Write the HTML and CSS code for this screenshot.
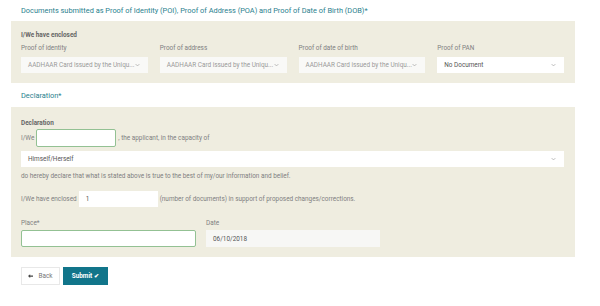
FILE: index.html
```html
<!DOCTYPE html>
<html lang="en">
<head>
<meta charset="UTF-8" />
<title>Declaration</title>
<link rel="stylesheet" href="styles.css">
</head>
<body>

<div class="page">
  <h3 class="section-title">Documents submitted as Proof of Identity (POI), Proof of Address (POA) and Proof of Date of Birth (DOB)*</h3>
  <div class="panel">
    <div class="strong-label">I/We have enclosed</div>
    <div class="doc-grid">
      <div class="field">
        <label>Proof of identity</label>
        <div class="select disabled"><span>AADHAAR Card issued by the Uniqu...</span><svg class="chev" viewBox="0 0 8 5"><path d="M1 1l3 3 3-3" /></svg></div>
      </div>
      <div class="field">
        <label>Proof of address</label>
        <div class="select disabled"><span>AADHAAR Card issued by the Uniqu...</span><svg class="chev" viewBox="0 0 8 5"><path d="M1 1l3 3 3-3" /></svg></div>
      </div>
      <div class="field">
        <label>Proof of date of birth</label>
        <div class="select disabled"><span>AADHAAR Card issued by the Uniqu...</span><svg class="chev" viewBox="0 0 8 5"><path d="M1 1l3 3 3-3" /></svg></div>
      </div>
      <div class="field">
        <label>Proof of PAN</label>
        <div class="select"><span>No Document</span><svg class="chev" viewBox="0 0 8 5"><path d="M1 1l3 3 3-3" /></svg></div>
      </div>
    </div>
  </div>

  <h3 class="section-title second">Declaration*</h3>
  <div class="panel decl">
    <div class="strong-label">Declaration</div>
    <div class="inline-row iwe">
      <span>I/We</span>
      <div class="input green name"></div>
      <span>, the applicant, in the capacity of</span>
    </div>
    <div class="select wide"><span>Himself/Herself</span><svg class="chev" viewBox="0 0 8 5"><path d="M1 1l3 3 3-3" /></svg></div>
    <p class="text">do hereby declare that what is stated above is true to the best of my/our information and belief.</p>
    <div class="inline-row enclosed">
      <span>I/We have enclosed</span>
      <div class="input count">1</div>
      <span>(number of documents) in support of proposed changes/corrections.</span>
    </div>
    <div class="place-grid">
      <div class="field">
        <label>Place*</label>
        <div class="input green place"></div>
      </div>
      <div class="field">
        <label>Date</label>
        <div class="input date">06/10/2018</div>
      </div>
    </div>
  </div>

  <div class="actions">
    <button class="btn back"><svg viewBox="0 0 8 6"><path d="M0 3L3.5 0v2H8v2H3.5v2z" /></svg>Back</button>
    <button class="btn submit">Submit <span class="tick">&#10004;</span></button>
  </div>
</div>

</body>
</html>
```

FILE: styles.css
```css
:root {
  --teal: #2a7f8e;
  --teal-dark: #11758a;
  --panel: #efede0;
  --label: #808080;
  --text: #555;
  --green: #93c193;
}

body {
  margin: 0;
  background: #fff;
  font-family: Roboto, "Liberation Sans", sans-serif;
  color: var(--text);
}

.page {
  width: 564px;
  padding: 5px 0 0 11px;
}

.section-title {
  margin: 0 0 4px;
  padding-left: 10px;
  font-size: 7.4px;
  line-height: 12px;
  font-weight: 400;
  color: var(--teal);
}
.section-title.second {
  margin: 7px 0 5px;
}

.panel {
  background: var(--panel);
  padding: 10px 11px 10px 10px;
}
.panel.decl {
  padding-top: 12px;
}

.strong-label {
  font-size: 6.4px;
  line-height: 8px;
  font-weight: 700;
  color: #666;
}

.doc-grid {
  display: grid;
  grid-template-columns: repeat(4, 1fr);
  column-gap: 12px;
  margin-top: 5px;
}

.field label {
  display: block;
  font-size: 6.4px;
  line-height: 8px;
  color: var(--label);
  margin-bottom: 5px;
}

.select {
  display: flex;
  align-items: center;
  justify-content: space-between;
  height: 16px;
  padding: 0 8px 0 7px;
  background: #fff;
  font-size: 6.4px;
  color: #555;
  box-sizing: border-box;
}
.select.disabled {
  background: #f9f9f7;
  color: #999;
}
.chev {
  width: 5px;
  height: 4px;
  fill: none;
  stroke: #999;
  stroke-width: 1;
}

.inline-row {
  display: flex;
  align-items: center;
  gap: 2px;
  font-size: 6.4px;
  color: var(--label);
}
.inline-row.iwe {
  margin-top: 2px;
}
.inline-row.enclosed {
  margin-top: 11px;
}

.input {
  box-sizing: border-box;
  background: #fff;
  font-size: 6.4px;
  color: #555;
  display: flex;
  align-items: center;
  padding: 0 7px;
}
.input.green {
  border: 1px solid var(--green);
  border-radius: 2px;
}
.input.name {
  width: 80px;
  height: 18px;
}
.input.count {
  width: 79px;
  height: 16px;
}
.input.place {
  height: 17px;
}
.input.date {
  height: 17px;
  background: #f7f7f5;
}

.select.wide {
  margin-top: 4px;
}

.text {
  margin: 5px 0 0;
  font-size: 6.4px;
  line-height: 8px;
  color: var(--label);
}

.place-grid {
  display: grid;
  grid-template-columns: 175px 174px;
  column-gap: 10px;
  margin-top: 12px;
}
.place-grid .field label {
  margin-bottom: 3px;
}

.actions {
  display: flex;
  gap: 3px;
  margin: 10px 0 0 10px;
}

.btn {
  height: 18px;
  border: none;
  font-family: inherit;
  font-size: 6.4px;
  display: flex;
  align-items: center;
  padding: 0;
  cursor: pointer;
}
.btn.back {
  width: 39px;
  background: #fff;
  border: 1px solid #e8e8e8;
  color: #777;
  justify-content: center;
  gap: 5px;
  box-sizing: border-box;
}
.btn.back svg {
  width: 5px;
  height: 4px;
  fill: #444;
}
.btn.submit {
  width: 45px;
  background: var(--teal-dark);
  color: #fff;
  font-weight: 700;
  justify-content: center;
  gap: 2px;
}
.tick {
  font-size: 6.4px;
}
```
